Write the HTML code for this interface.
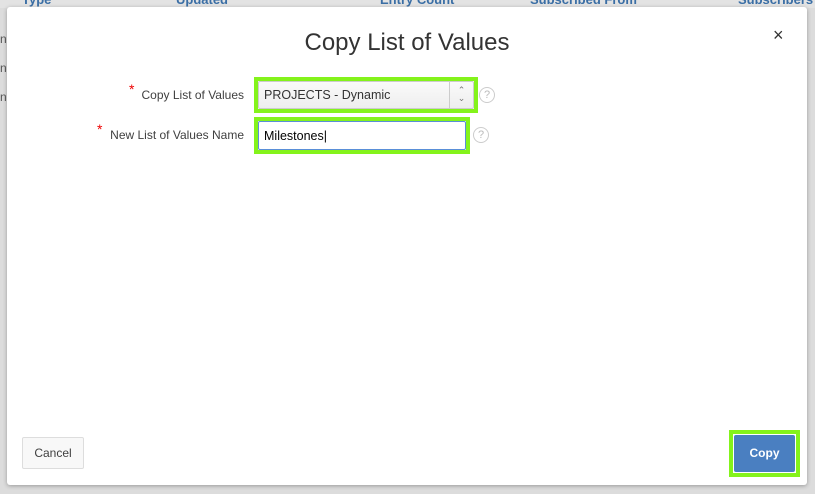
<!DOCTYPE html>
<html><head><style>
*{box-sizing:border-box;margin:0;padding:0}
body{width:815px;height:494px;background:#dcdcdc;font-family:"Liberation Sans",sans-serif;position:relative;overflow:hidden}
.hdr{position:absolute;top:0;left:0;width:815px;height:8px;background:#e3e3e3;color:#3a6ea5;font-size:13px;font-weight:bold}
.hdr span{position:absolute;top:-8px}
.dlg{position:absolute;left:7px;top:7px;width:800px;height:478px;background:#fff;border-radius:3px;box-shadow:0 1px 4px rgba(0,0,0,.3)}
.title{position:absolute;left:0;width:800px;top:22px;text-align:center;font-size:24px;color:#333}
.x{position:absolute;left:766px;top:18px;font-size:18px;color:#333}
.lbl{position:absolute;font-size:12px;color:#404040;text-align:right}
.star{color:#e00;font-size:14px;position:absolute}
.g{position:absolute;border:4px solid #84f31b}
.help{position:absolute;width:16px;height:16px;border:1px solid #ccc;border-radius:50%;color:#bbb;font-size:11px;text-align:center;line-height:14px}
.bgside{position:absolute;color:#555;font-size:12px}
</style></head><body>
<div class="hdr"><span style="left:22px">Type</span><span style="left:176px">Updated</span><span style="left:380px">Entry Count</span><span style="left:530px">Subscribed From</span><span style="left:738px">Subscribers</span></div>
<div class="bgside" style="left:0;top:32px">n</div>
<div class="bgside" style="left:0;top:61px">n</div>
<div class="bgside" style="left:0;top:90px">n</div>
<div class="dlg">
<div class="title">Copy List of Values</div>
<div class="x">×</div>
<span class="star" style="left:122px;top:74px">*</span>
<div class="lbl" style="left:60px;width:177px;top:81px">Copy List of Values</div>
<span class="star" style="left:90px;top:114px">*</span>
<div class="lbl" style="left:60px;width:177px;top:121px">New List of Values Name</div>
<div class="g" style="left:247px;top:70px;width:224px;height:36px"></div>
<div style="position:absolute;left:251px;top:74px;width:216px;height:28px;border:1px solid #ccc;border-radius:2px;background:linear-gradient(#fafafa,#eee);font-size:12.5px;color:#333;padding:6px 0 0 5px">PROJECTS - Dynamic
<div style="position:absolute;right:0;top:0;width:24px;height:26px;border-left:1px solid #ccc;color:#777;font-size:9px;line-height:8px;text-align:center;padding-top:4px">⌃<br>⌄</div></div>
<div class="help" style="left:472px;top:80px">?</div>
<div class="g" style="left:247px;top:110px;width:216px;height:37px"></div>
<div style="position:absolute;left:251px;top:114px;width:208px;height:29px;border:1px solid #5a8fd8;border-radius:2px;font-size:12.5px;color:#000;padding:7px 0 0 5px">Milestones|</div>
<div class="help" style="left:466px;top:120px">?</div>
<div style="position:absolute;left:15px;top:430px;width:62px;height:32px;border:1px solid #ddd;border-radius:2px;background:#f8f8f8;font-size:12px;color:#404040;text-align:center;line-height:30px">Cancel</div>
<div class="g" style="left:722px;top:423px;width:71px;height:47px"></div>
<div style="position:absolute;left:727px;top:428px;width:61px;height:37px;background:#4a7fc1;border-radius:2px;color:#fff;font-size:12px;font-weight:bold;text-align:center;line-height:37px">Copy</div>
</div>
</body></html>
